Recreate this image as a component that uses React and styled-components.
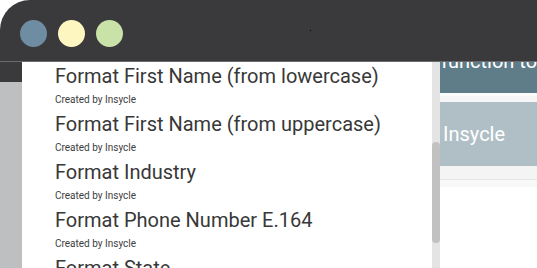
import React from 'react';
import styled, { createGlobalStyle } from 'styled-components';

const GlobalStyle = createGlobalStyle`
  html, body {
    margin: 0;
    padding: 0;
    background: #fff;
  }
  body {
    font-family: Roboto, 'Liberation Sans', sans-serif;
  }
`;

const StyledWindow = styled.div`
  width: 537px;
  height: 268px;
  display: flex;
  flex-direction: column;
  background: #3a3a3c;
  border-radius: 30px 0 0 0;
  overflow: hidden;
  .window__titlebar {
    position: relative;
    height: 62px;
    flex-shrink: 0;
    display: flex;
    align-items: center;
    gap: 11px;
    padding-left: 20px;
    padding-top: 6px;
    box-sizing: border-box;
    border-bottom: 1px solid #6a6a6c;
  }
  .window__speck {
    position: absolute;
    left: 310px;
    top: 30px;
    width: 1px;
    height: 1px;
    background: #000;
  }
  .window__body {
    flex: 1;
    display: flex;
    min-height: 0;
  }
`;

const Light = styled.span`
  width: 27px;
  height: 27px;
  border-radius: 50%;
  background: ${({ color }) => color};
`;

const SideStrip = styled.div`
  width: 22px;
  flex-shrink: 0;
  background: linear-gradient(#3a3a3c 0 20px, #bebfc1 20px);
`;

const StyledList = styled.div`
  width: 410px;
  flex-shrink: 0;
  background: #fff;
  overflow: hidden;
  display: flex;
  flex-direction: column;
  padding-left: 33px;
  padding-top: 1px;
  box-sizing: border-box;
  .list__title {
    font-size: 20px;
    line-height: 26px;
    color: #383838;
    white-space: nowrap;
  }
  .list__author {
    font-size: 10px;
    line-height: 22px;
    color: #3d3d3d;
    white-space: nowrap;
  }
`;

const StyledScrollbar = styled.div`
  width: 8px;
  flex-shrink: 0;
  background: #e4e4e4;
  padding-top: 80px;
  box-sizing: border-box;
  .scrollbar__thumb {
    height: 101px;
    border-radius: 4px;
    background: #c1c1c1;
  }
`;

const StyledPanel = styled.div`
  flex: 1;
  display: flex;
  flex-direction: column;
  background: #fff;
  overflow: hidden;
  .panel__head {
    height: 31px;
    background: #5f7c89;
    color: #fff;
    font-size: 20px;
    line-height: 20px;
    overflow: hidden;
    padding-left: 1px;
    white-space: nowrap;
  }
  .panel__head span {
    display: block;
    margin-top: -11px;
  }
  .panel__gap {
    height: 9px;
    background: #f6f6f6;
    border-top: 3px solid #fbfbfb;
    box-sizing: border-box;
  }
  .panel__name {
    height: 64px;
    display: flex;
    align-items: center;
    padding-left: 3px;
    background: #b0bfc6;
    color: #fff;
    font-size: 20px;
  }
  .panel__rule {
    height: 13px;
    background: #f4f4f4;
    border-bottom: 1px solid #e6e6e6;
  }
  .panel__rule--thin {
    height: 7px;
    background: #f8f8f8;
    border-bottom: none;
  }
`;

const items = [
  'Format First Name (from lowercase)',
  'Format First Name (from uppercase)',
  'Format Industry',
  'Format Phone Number E.164',
  'Format State',
];

const App = () => (
  <>
    <GlobalStyle />
    <StyledWindow>
      <div className="window__titlebar">
        <Light color="#6e8ca2" />
        <Light color="#fdf6c1" />
        <Light color="#c9e2a8" />
        <span className="window__speck" />
      </div>
      <div className="window__body">
        <SideStrip />
        <StyledList>
          {items.map((title) => (
            <div key={title}>
              <div className="list__title">{title}</div>
              <div className="list__author">Created by Insycle</div>
            </div>
          ))}
        </StyledList>
        <StyledScrollbar>
          <div className="scrollbar__thumb" />
        </StyledScrollbar>
        <StyledPanel>
          <div className="panel__head">
            <span>function to</span>
          </div>
          <div className="panel__gap" />
          <div className="panel__name">Insycle</div>
          <div className="panel__rule" />
          <div className="panel__rule panel__rule--thin" />
        </StyledPanel>
      </div>
    </StyledWindow>
  </>
);

export default App;
